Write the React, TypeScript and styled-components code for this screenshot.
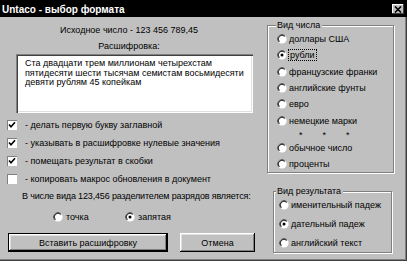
import React from "react";
import styled, { createGlobalStyle } from "styled-components";

const Global = createGlobalStyle`
  html, body { margin: 0; padding: 0; background: #c0c0c0; }
  * { box-sizing: border-box; }
`;

const Window = styled.div`
  width: 407px;
  height: 261px;
  background: #c0c0c0;
  font-family: "Liberation Sans", Arial, sans-serif;
  font-size: 9px;
  color: #000;
  display: flex;
  flex-direction: column;
  overflow: hidden;
  box-shadow: inset -1px -1px #404040, inset -2px -2px #808080;
`;

const TitleBar = styled.div`
  height: 17px;
  flex: none;
  background: #000;
  color: #fff;
  display: flex;
  align-items: center;
  justify-content: space-between;
  padding: 1px 3px 0 2px;
  font-size: 10px;
  font-weight: bold;
`;

const CloseBtn = styled.div`
  width: 12px;
  height: 10px;
  background: #c0c0c0;
  display: flex;
  align-items: center;
  justify-content: center;
  box-shadow: inset -1px -1px #404040, inset 1px 1px #fff;
`;

const Body = styled.div`
  display: grid;
  grid-template-columns: 255px 127px;
  column-gap: 12px;
`;

const LeftCol = styled.div`
  display: flex;
  flex-direction: column;
  padding-top: 7px;
`;

const Caption = styled.div<{ $top?: number }>`
  line-height: 12px;
  text-align: center;
  padding-left: 3px;
  margin-top: ${(p) => p.$top ?? 0}px;
`;

const TextArea = styled.div`
  margin: 2px 0 0 16px;
  width: 237px;
  height: 59px;
  background: #fff;
  padding: 5px 8px 0 9px;
  line-height: 9.5px;
  box-shadow: inset 1px 1px #808080, inset 2px 2px #404040,
    inset -1px -1px #fff, inset -2px -2px #dfdfdf;
`;

const CheckList = styled.div`
  margin-top: 3px;
  display: flex;
  flex-direction: column;
`;

const CheckRow = styled.div`
  height: 18px;
  display: flex;
  align-items: center;
  gap: 8px;
  padding-left: 7px;
`;

const Box = styled.span`
  width: 10px;
  height: 10px;
  flex: none;
  background: #fff;
  display: flex;
  align-items: center;
  justify-content: center;
  box-shadow: inset 1px 1px #808080, inset -1px -1px #fff;
`;

const SepText = styled.div`
  margin-top: 2px;
  line-height: 12px;
  padding-left: 22px;
  white-space: nowrap;
  letter-spacing: -0.15px;
`;

const SepRadios = styled.div`
  margin-top: 8px;
  height: 14px;
  display: flex;
  align-items: center;
  gap: 30px;
  padding-left: 53px;
`;

const RadioItem = styled.div<{ $w?: number }>`
  display: flex;
  align-items: center;
  gap: 3px;
  width: ${(p) => (p.$w ? `${p.$w}px` : "auto")};
`;

const Buttons = styled.div`
  margin-top: 9px;
  display: flex;
  gap: 12px;
  padding-left: 8px;
`;

const Button = styled.div<{ $w: number; $default?: boolean }>`
  width: ${(p) => p.$w}px;
  height: 19px;
  display: flex;
  align-items: center;
  justify-content: center;
  background: #c0c0c0;
  border: ${(p) => (p.$default ? "1px solid #000" : "none")};
  box-shadow: inset -1px -1px #000, inset 1px 1px #fff,
    inset -2px -2px #808080, inset 2px 2px #dfdfdf;
`;

const RightCol = styled.div`
  display: flex;
  flex-direction: column;
  padding-top: 8px;
`;

const Group = styled.div<{ $h: number; $ml?: number; $mt?: number; $w?: number; $pt: number; $pl: number }>`
  position: relative;
  height: ${(p) => p.$h}px;
  width: ${(p) => (p.$w ? `${p.$w}px` : "auto")};
  margin: ${(p) => p.$mt ?? 0}px 0 0 ${(p) => p.$ml ?? 0}px;
  padding: ${(p) => p.$pt}px 0 0 ${(p) => p.$pl}px;
  border: 1px solid #808080;
  box-shadow: inset 1px 1px #fff, 1px 1px #fff;
  display: flex;
  flex-direction: column;
`;

const Legend = styled.span<{ $left: number }>`
  position: absolute;
  top: -7px;
  left: ${(p) => p.$left}px;
  padding: 0 2px 0 1px;
  line-height: 12px;
  background: #c0c0c0;
`;

const OptRow = styled.div<{ $h: number }>`
  height: ${(p) => p.$h}px;
  display: flex;
  align-items: center;
  gap: 2px;
`;

const Focus = styled.span`
  outline: 1px dotted #000;
  outline-offset: 0;
  padding: 0 1px;
  line-height: 10px;
`;

const Stars = styled.div`
  height: 10.6px;
  display: flex;
  gap: 20px;
  padding-left: 22px;
  line-height: 12px;
`;

function Radio({ on }: { on?: boolean }) {
  return (
    <svg width="10" height="10" viewBox="0 0 12 12" style={{ flex: "none" }}>
      <circle cx="6" cy="6" r="5.5" fill="#fff" />
      <path d="M9.9 2.1 A5.5 5.5 0 0 0 2.1 9.9" stroke="#808080" strokeWidth="1.2" fill="none" />
      <path d="M9.2 2.8 A4.5 4.5 0 0 0 2.8 9.2" stroke="#000" strokeWidth="1.2" fill="none" />
      {on && <circle cx="6" cy="6" r="1.8" fill="#000" />}
    </svg>
  );
}

function Check({ on }: { on?: boolean }) {
  return (
    <Box>
      {on && (
        <svg width="8" height="8" viewBox="0 0 8 8">
          <path d="M1 3.5 L3 5.8 L7 1.2" stroke="#000" strokeWidth="1.6" fill="none" />
        </svg>
      )}
    </Box>
  );
}

const checks = [
  { label: "- делать первую букву заглавной", on: true },
  { label: "- указывать в расшифровке нулевые значения", on: true },
  { label: "- помещать результат в скобки", on: true },
  { label: "- копировать макрос обновления в документ", on: false },
];

export default function App() {
  return (
    <>
      <Global />
      <Window>
        <TitleBar>
          <span>Untaco - выбор формата</span>
          <CloseBtn>
            <svg width="8" height="7" viewBox="0 0 8 7">
              <path d="M1 0.5 L7 6.5 M7 0.5 L1 6.5" stroke="#000" strokeWidth="1.6" />
            </svg>
          </CloseBtn>
        </TitleBar>
        <Body>
          <LeftCol>
            <Caption>Исходное число - 123 456 789,45</Caption>
            <Caption $top={4}>Расшифровка:</Caption>
            <TextArea>
              Ста двадцати трем миллионам четырехстам пятидесяти шести тысячам
              семистам восьмидесяти девяти рублям 45 копейкам
            </TextArea>
            <CheckList>
              {checks.map((c) => (
                <CheckRow key={c.label}>
                  <Check on={c.on} />
                  <span>{c.label}</span>
                </CheckRow>
              ))}
            </CheckList>
            <SepText>В числе вида 123,456 разделителем разрядов является:</SepText>
            <SepRadios>
              <RadioItem $w={42}>
                <Radio />
                <span>точка</span>
              </RadioItem>
              <RadioItem>
                <Radio on />
                <span>запятая</span>
              </RadioItem>
            </SepRadios>
            <Buttons>
              <Button $w={160} $default>Вставить расшифровку</Button>
              <Button $w={75}>Отмена</Button>
            </Buttons>
          </LeftCol>
          <RightCol>
            <Group $h={148} $pt={4.8} $pl={9}>
              <Legend $left={8}>Вид числа</Legend>
              <OptRow $h={16.4}><Radio /><span>доллары США</span></OptRow>
              <OptRow $h={16.4}><Radio on /><Focus>рубли</Focus></OptRow>
              <OptRow $h={16.4}><Radio /><span>французские франки</span></OptRow>
              <OptRow $h={16.4}><Radio /><span>английские фунты</span></OptRow>
              <OptRow $h={16.4}><Radio /><span>евро</span></OptRow>
              <OptRow $h={16.4}><Radio /><span>немецкие марки</span></OptRow>
              <Stars><span>*</span><span>*</span><span>*</span></Stars>
              <OptRow $h={16.4}><Radio /><span>обычное число</span></OptRow>
              <OptRow $h={16.4}><Radio /><span>проценты</span></OptRow>
            </Group>
            <Group $h={62} $mt={18} $ml={6} $w={119} $pt={4.2} $pl={5}>
              <Legend $left={2}>Вид результата</Legend>
              <OptRow $h={19.5}><Radio /><span>именительный падеж</span></OptRow>
              <OptRow $h={19.5}><Radio on /><span>дательный падеж</span></OptRow>
              <OptRow $h={19.5}><Radio /><span>английский текст</span></OptRow>
            </Group>
          </RightCol>
        </Body>
      </Window>
    </>
  );
}
